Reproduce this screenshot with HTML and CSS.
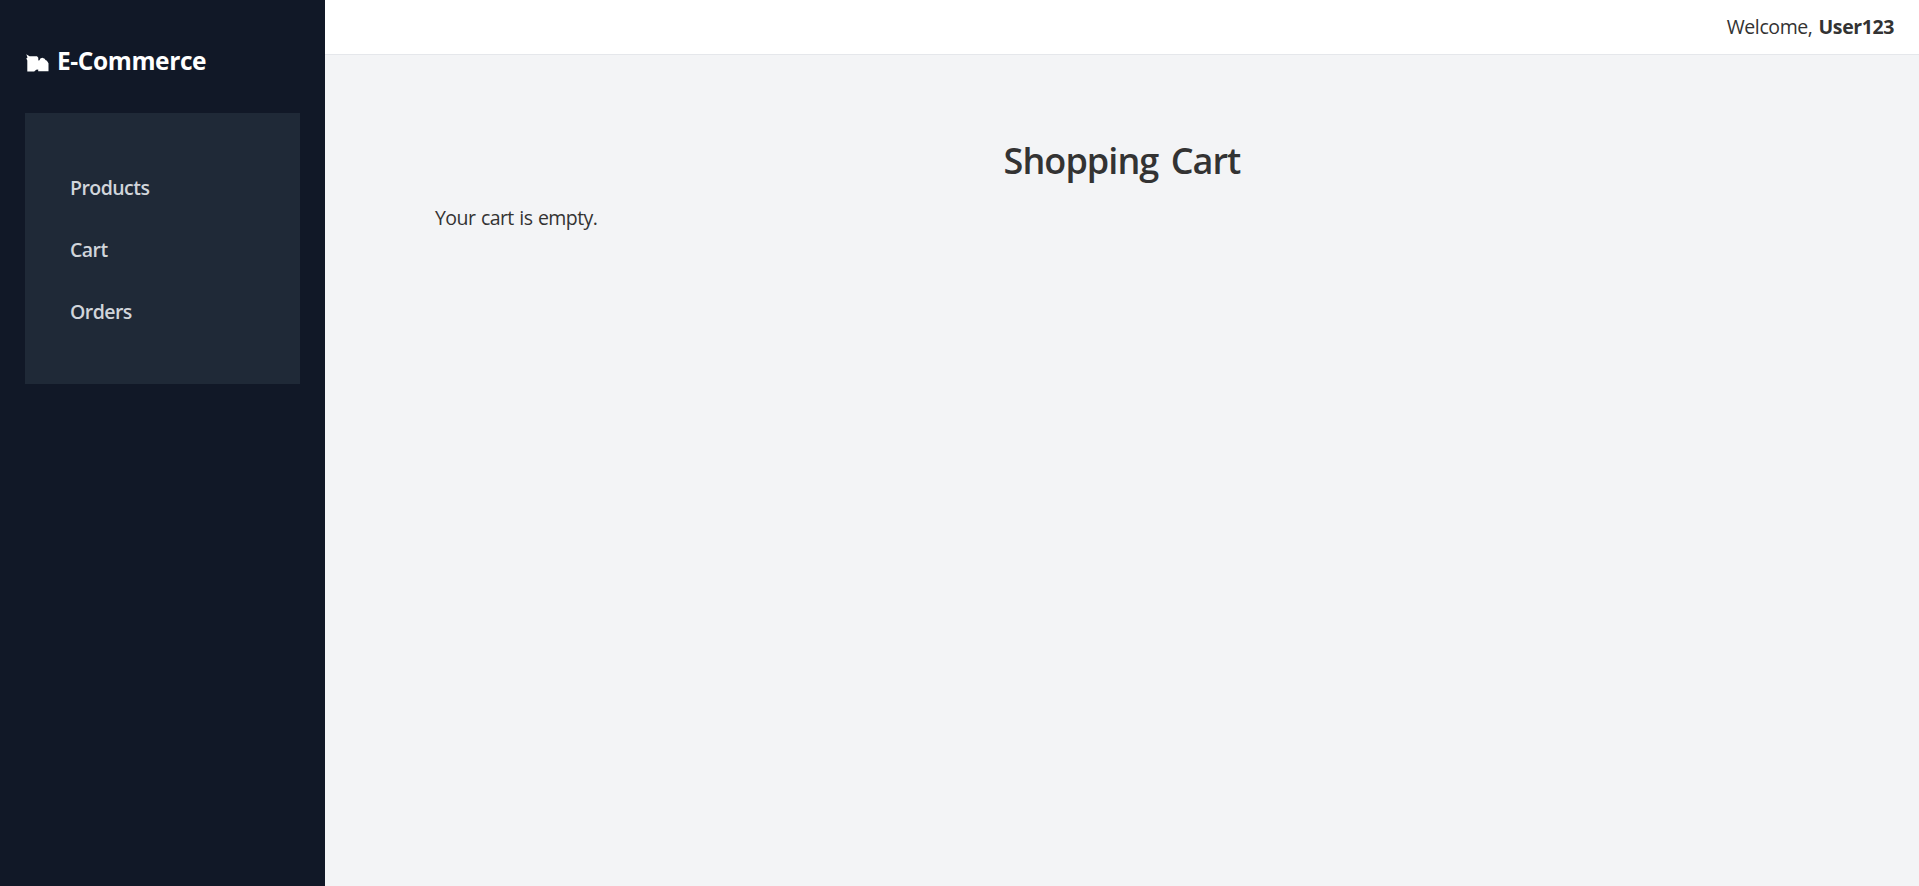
FILE: index.html
```html
<!DOCTYPE html>
<html lang="en">
<head>
<meta charset="utf-8">
<title>E-Commerce</title>
<link rel="stylesheet" href="styles.css">
</head>
<body>
<div class="layout">
  <aside class="sidebar">
    <h2 class="brand">
      <svg class="brand-icon" width="24" height="18" viewBox="0 0 24 18" aria-hidden="true"><path d="M.3.3 3.500 2.200h7.500l1.300 1.600v2.800l1.200-.4.800-1.600 2-.9 2.400 1 .8 1.400 1.400.6 1.600 2.500v8H12.200v-1.600l-2 .2-2 1.600H1.300V6.400L.3 4.400l1.200-1z" fill="#fff"/></svg>
      <span>E-Commerce</span>
    </h2>
    <nav class="menu">
      <a class="menu-link products">Products</a>
      <a class="menu-link cart">Cart</a>
      <a class="menu-link orders">Orders</a>
    </nav>
  </aside>
  <div class="page">
    <header class="topbar"><span class="welcome">Welcome,</span><strong class="user">User123</strong></header>
    <main class="content">
      <h1 class="title">Shopping Cart</h1>
      <p class="empty">Your cart is empty.</p>
    </main>
  </div>
</div>
</body>
</html>
```
FILE: styles.css
```css
* { box-sizing: border-box; }
body {
  margin: 0;
  font-family: "Open Sans", "Noto Sans", sans-serif;
  font-size: 19.5px;
  color: #333;
  background: #f3f4f6;
}
.layout { display: flex; height: 886px; }
.sidebar {
  flex: none;
  width: 325px;
  padding: 44px 25px 0;
  background: #111827;
}
.brand {
  display: flex;
  gap: 7px;
  margin: 0 0 36px;
  height: 33px;
  line-height: 33px;
  font-size: 24.5px;
  font-weight: 700;
  letter-spacing: -0.4px;
  color: #fff;
}
.brand-icon { flex: none; margin: 10px 0 0 1px; }
.menu {
  display: flex;
  flex-direction: column;
  height: 271px;
  padding: 44px 45px;
  background: #1f2937;
}
.menu-link {
  height: 62px;
  line-height: 62px;
  font-weight: 600;
  letter-spacing: -0.55px;
  color: #d1d5db;
}
.page { flex: 1; }
.topbar {
  display: flex;
  justify-content: flex-end;
  gap: 6px;
  height: 55px;
  padding-right: 25px;
  line-height: 54px;
  letter-spacing: -0.4px;
  background: #fff;
  border-bottom: 1px solid #e5e7eb;
}
.user { font-weight: 700; }
.content { padding: 78px 110px 0; }
.title {
  margin: 0;
  height: 56px;
  line-height: 56px;
  text-align: center;
  font-size: 36px;
  font-weight: 600;
  letter-spacing: -0.95px;
  word-spacing: 4px;
}
.empty {
  margin: 14px 0 0;
  line-height: 30px;
  letter-spacing: -0.55px;
  word-spacing: 1px;
}
```
